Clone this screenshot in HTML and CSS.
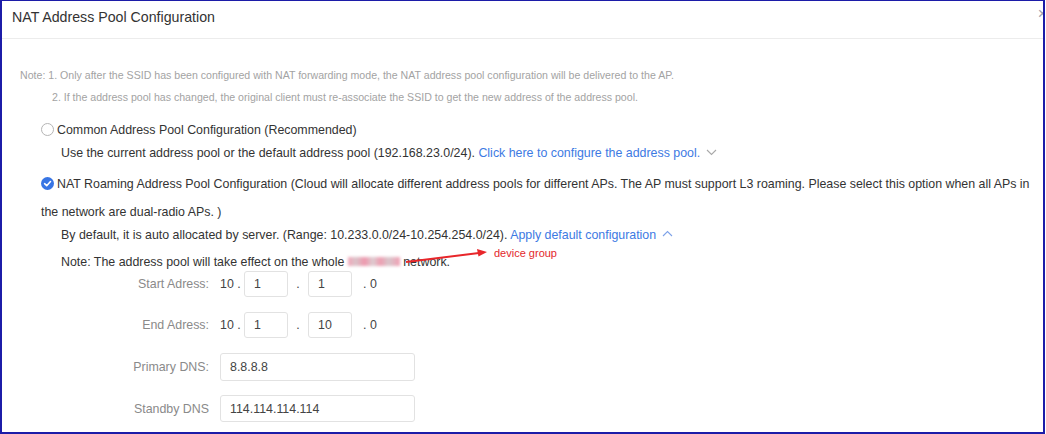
FILE: index.html
```html
<!DOCTYPE html>
<html>
<head>
<meta charset="utf-8">
<link rel="stylesheet" href="styles.css">
</head>
<body>
<div class="frame">
  <div class="header">
    <div class="title">NAT Address Pool Configuration</div>
    <span class="close">×</span>
  </div>
  <div class="content">
    <div class="notes">
      <div class="note1">Note: 1. Only after the SSID has been configured with NAT forwarding mode, the NAT address pool configuration will be delivered to the AP.</div>
      <div class="note2">2. If the address pool has changed, the original client must re-associate the SSID to get the new address of the address pool.</div>
    </div>

    <div class="opt opt-common"><span class="radio"></span>Common Address Pool Configuration (Recommended)</div>
    <div class="sub sub-use">Use the current address pool or the default address pool (192.168.23.0/24). <span class="link">Click here to configure the address pool.</span><svg class="chev" width="11" height="7" viewBox="0 0 11 7"><path d="M1 1 L5.5 5.5 L10 1" fill="none" stroke="#a9a9a9" stroke-width="1.1"/></svg></div>

    <div class="opt opt-roam"><span class="nowrap"><span class="radio checked"><svg width="13" height="13" viewBox="0 0 13 13"><circle cx="6.5" cy="6.5" r="6.5" fill="#3875e4"/><path d="M3.6 6.7 L5.7 8.7 L9.5 4.5" fill="none" stroke="#fff" stroke-width="1.6" stroke-linecap="round" stroke-linejoin="round"/></svg></span>NAT Roaming Address Pool Configuration (Cloud will allocate different address pools for different APs. The AP must support L3 roaming. Please select this option when all APs in</span><br>the network are dual-radio APs. )</div>
    <div class="sub sub-default">By default, it is auto allocated by server. (Range: 10.233.0.0/24-10.254.254.0/24). <span class="link">Apply default configuration</span><svg class="chev up" width="11" height="7" viewBox="0 0 11 7"><path d="M1 6 L5.5 1.5 L10 6" fill="none" stroke="#7ea2e8" stroke-width="1.1"/></svg></div>
    <div class="sub sub-note">Note: The address pool will take effect on the whole <span class="blur" aria-hidden="true"></span> network.
      <svg class="arrow" width="90" height="18" viewBox="0 0 90 18"><path d="M1 14 L74 5" stroke="#e8262a" stroke-width="2" fill="none"/><path d="M82 4 L72 1 L73.5 8.5 Z" fill="#e8262a"/></svg>
      <span class="annot">device group</span>
    </div>

    <div class="form">
      <div class="row row-start">
        <label class="lbl">Start Adress:</label>
        <div class="ip">
          <span class="seg-txt">10 .</span>
          <span class="box">1</span>
          <span class="dot">.</span>
          <span class="box">1</span>
          <span class="tail">. 0</span>
        </div>
      </div>
      <div class="row row-end">
        <label class="lbl">End Adress:</label>
        <div class="ip">
          <span class="seg-txt">10 .</span>
          <span class="box">1</span>
          <span class="dot">.</span>
          <span class="box">10</span>
          <span class="tail">. 0</span>
        </div>
      </div>
      <div class="row row-dns1">
        <label class="lbl">Primary DNS:</label>
        <span class="wide">8.8.8.8</span>
      </div>
      <div class="row row-dns2">
        <label class="lbl">Standby DNS</label>
        <span class="wide">114.114.114.114</span>
      </div>
    </div>
  </div>
</div>
</body>
</html>
```

FILE: styles.css
```css
html, body {
  margin: 0;
  padding: 0;
  background: #ffffff;
}
body {
  font-family: "Liberation Sans", Arial, sans-serif;
  color: #333333;
}
.frame {
  position: relative;
  box-sizing: border-box;
  width: 1045px;
  height: 434px;
  border-top: 1px solid #1c1ca8;
  border-left: 2px solid #1c1ca8;
  border-right: 2px solid #1c1ca8;
  border-bottom: 2px solid #1c1ca8;
  overflow: hidden;
  background: #fff;
}
.header {
  position: relative;
  height: 37px;
  border-bottom: 1px solid #ececec;
  display: flex;
  align-items: center;
  padding-left: 10px;
}
.title {
  font-size: 14.2px;
  color: #333;
  margin-top: -5px;
}
.close {
  position: absolute;
  right: -4px;
  top: 4px;
  font-size: 16px;
  color: #9aa0b0;
}
.content {
  padding-top: 25px;
}
.notes {
  font-size: 10.6px;
  line-height: 22px;
  color: #a3a3a3;
}
.note1 { padding-left: 18px; }
.note2 { padding-left: 50px; }

.opt {
  font-size: 12.4px;
  color: #333;
  padding-left: 39px;
}
.nowrap { white-space: nowrap; }
.opt-common {
  margin-top: 10px;
  line-height: 24px;
}
.opt-roam {
  margin-top: 6px;
  line-height: 28px;
}
.radio {
  display: inline-block;
  width: 13px;
  height: 13px;
  box-sizing: border-box;
  border: 1px solid #b5b5b5;
  border-radius: 50%;
  vertical-align: -2px;
  margin-right: 3px;
}
.radio.checked {
  border: none;
}
.radio.checked svg { display: block; }

.sub {
  font-size: 12.4px;
  color: #333;
  padding-left: 59px;
}
.sub-use { line-height: 22px; }
.sub-default { line-height: 18px; margin-top: 0; }
.sub-note {
  position: relative;
  line-height: 18px;
  margin-top: 9px;
}
.link { color: #3d7ae3; }
.chev {
  margin-left: 6px;
  vertical-align: 1px;
}
.chev.up { vertical-align: 2px; }
.blur {
  display: inline-block;
  width: 52px;
  height: 9px;
  vertical-align: 0px;
  filter: blur(1.4px);
  background: linear-gradient(90deg, #f2a6b8 0%, #d9c3c9 15%, #ef97ad 32%, #dccdd1 48%, #ee9db1 62%, #d8c6cb 78%, #f19fb3 100%);
}
.arrow {
  position: absolute;
  left: 403px;
  top: -5px;
}
.annot {
  position: absolute;
  left: 492px;
  top: -9px;
  font-size: 11px;
  color: #e3262b;
}

.form {
  margin-top: 0;
}
.row {
  display: flex;
  align-items: center;
  font-size: 12.4px;
}
.lbl {
  width: 207px;
  text-align: right;
  color: #8a8a8a;
  margin-right: 11px;
}
.row-start { height: 26px; }
.row-end { height: 26px; margin-top: 15px; }
.row-dns1 { height: 28px; margin-top: 15px; }
.row-dns2 { height: 27px; margin-top: 14px; }
.ip {
  display: flex;
  align-items: center;
  color: #444;
}
.seg-txt { width: 24px; }
.box {
  box-sizing: border-box;
  width: 44px;
  height: 26px;
  border: 1px solid #e2e2e2;
  border-radius: 3px;
  padding-left: 9px;
  line-height: 24px;
  color: #444;
}
.dot {
  width: 20px;
  text-align: center;
}
.tail {
  margin-left: 11px;
}
.wide {
  box-sizing: border-box;
  width: 195px;
  height: 100%;
  border: 1px solid #e2e2e2;
  border-radius: 3px;
  padding-left: 9px;
  display: flex;
  align-items: center;
  color: #444;
}
```
